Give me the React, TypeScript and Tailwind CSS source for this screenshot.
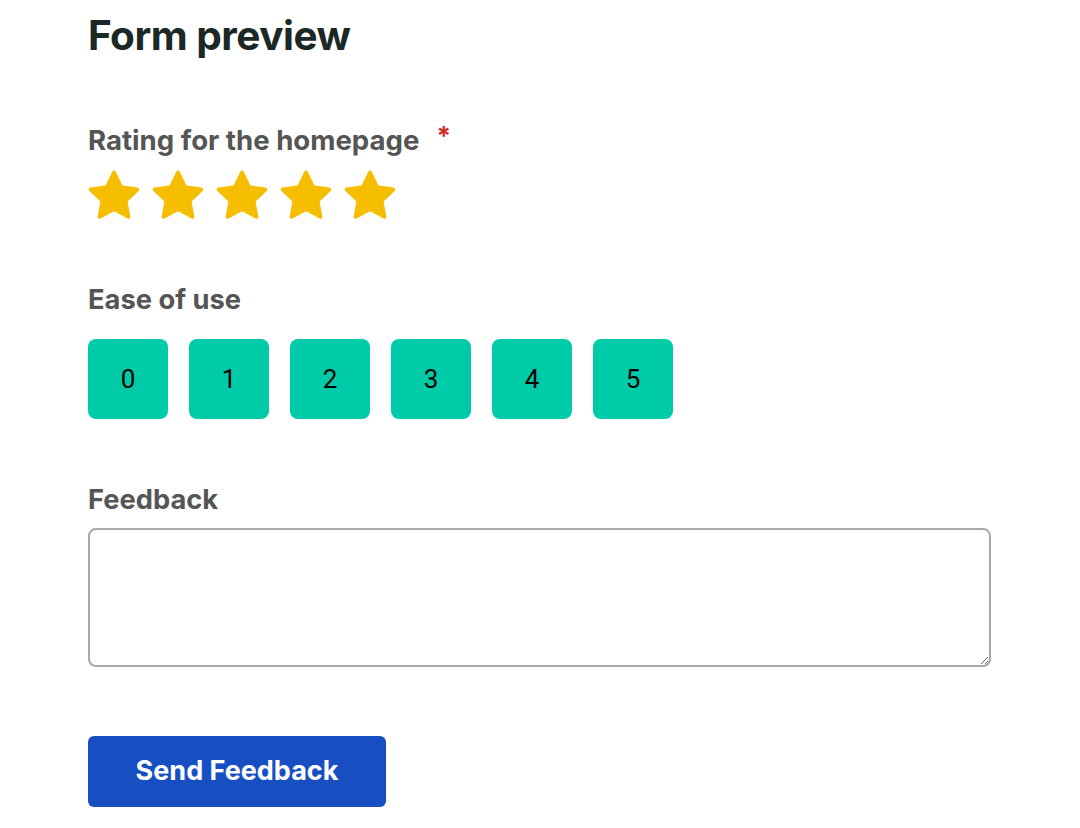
import React from "react";

function StarIcon() {
  return (
    <svg width="60" height="60" viewBox="0 0 24 24" className="block">
      <path
        d="M12 2.6l2.85 5.9 6.45.9-4.7 4.5 1.15 6.4L12 17.2l-5.75 3.1 1.15-6.4-4.7-4.5 6.45-.9z"
        fill="#F6BE00"
        stroke="#F6BE00"
        strokeWidth="1.6"
        strokeLinejoin="round"
      />
    </svg>
  );
}

export default function App() {
  return (
    <div className="min-h-[828px] w-[1080px] bg-white pl-[88px] pt-[12px]" style={{ fontFamily: "Inter, 'Liberation Sans', sans-serif" }}>
      <h1 className="text-[40.5px] font-bold leading-[48px] tracking-[-0.5px] text-[#1c2826]">Form preview</h1>

      <div className="mt-[64px] flex items-start">
        <span className="text-[27.6px] font-bold leading-[32px] text-[#555555]">Rating for the homepage</span>
        <span className="ml-[17px] text-[26px] font-bold leading-[24px] text-[#d42a2a]">*</span>
      </div>
      <div className="-ml-[4px] mt-[10px] flex gap-[4px]">
        {[0, 1, 2, 3, 4].map((i) => (
          <StarIcon key={i} />
        ))}
      </div>

      <div className="mt-[58px] text-[27.3px] font-bold leading-[32px] text-[#555555]">Ease of use</div>
      <div className="mt-[23px] flex gap-[21px]">
        {[0, 1, 2, 3, 4, 5].map((n) => (
          <div
            key={n}
            className="flex h-[80px] w-[80px] items-center justify-center rounded-[8px] bg-[#00CBA9] text-[26px] text-black"
            style={{ fontFamily: "Roboto, 'Liberation Sans', sans-serif" }}
          >
            {n}
          </div>
        ))}
      </div>

      <div className="mt-[65px] text-[27.3px] font-bold leading-[32px] text-[#555555]">Feedback</div>
      <textarea className="mt-[12px] block h-[139px] w-[903px] rounded-[8px] border-2 border-[#a9a9a9] bg-white"></textarea>

      <button className="mt-[69px] flex h-[71px] w-[298px] items-center justify-center rounded-[6px] bg-[#174FC3] text-[27px] font-bold text-white">
        Send Feedback
      </button>
    </div>
  );
}
